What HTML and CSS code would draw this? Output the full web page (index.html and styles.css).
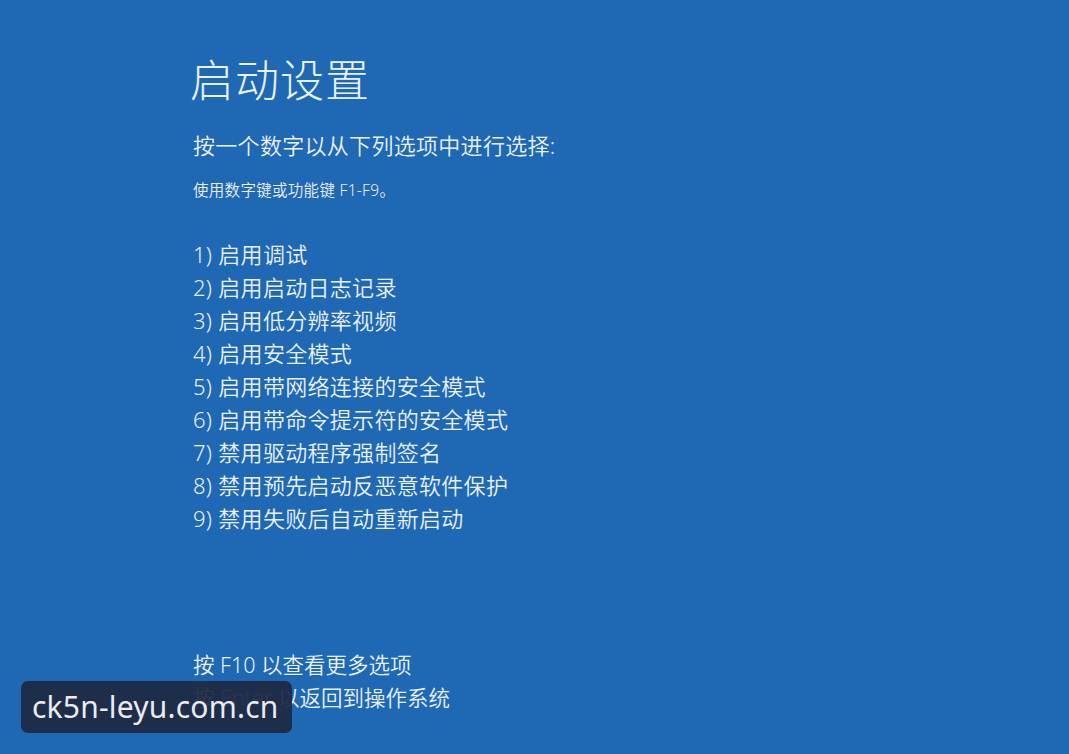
FILE: index.html
```html
<!DOCTYPE html>
<html lang="zh-CN">
<head>
<meta charset="utf-8">
<title>启动设置</title>
<link rel="stylesheet" href="styles.css">
</head>
<body>
<main class="screen">
  <h1 class="title">启动设置</h1>
  <p class="prompt">按一个数字以从下列选项中进行选择:</p>
  <p class="hint">使用数字键或功能键 F1-F9。</p>
  <ol class="options">
    <li>1) 启用调试</li>
    <li>2) 启用启动日志记录</li>
    <li>3) 启用低分辨率视频</li>
    <li>4) 启用安全模式</li>
    <li>5) 启用带网络连接的安全模式</li>
    <li>6) 启用带命令提示符的安全模式</li>
    <li>7) 禁用驱动程序强制签名</li>
    <li>8) 禁用预先启动反恶意软件保护</li>
    <li>9) 禁用失败后自动重新启动</li>
  </ol>
  <div class="footer">
    <p>按 F10 以查看更多选项</p>
    <p>按 Enter 以返回到操作系统</p>
  </div>
</main>
<div class="watermark">ck5n-leyu.com.cn</div>
</body>
</html>
```
FILE: styles.css
```css
html, body {
  margin: 0;
  padding: 0;
}
body {
  width: 1069px;
  height: 754px;
  overflow: hidden;
  background: #1e68b4;
  color: #eaf1fa;
  font-family: "Noto Sans", "Noto Sans CJK SC", sans-serif;
  position: relative;
}
.screen {
  display: flex;
  flex-direction: column;
  padding: 52px 0 0 190px;
}
.title {
  margin: 0;
  font-size: 44px;
  line-height: 56px;
  font-weight: 300;
  letter-spacing: 1px;
}
.prompt {
  margin: 22px 0 0 3px;
  font-size: 22px;
  line-height: 30px;
  font-weight: 350;
  letter-spacing: 0.3px;
}
.hint {
  margin: 20px 0 0 3px;
  font-size: 15.5px;
  line-height: 20px;
  font-weight: 350;
  letter-spacing: 0.3px;
}
.options {
  list-style: none;
  margin: 38px 0 0 3px;
  padding: 0;
  display: flex;
  flex-direction: column;
}
.options li {
  font-size: 22px;
  line-height: 33px;
  font-weight: 350;
  letter-spacing: 0.3px;
}
.footer {
  margin: 113px 0 0 3px;
  display: flex;
  flex-direction: column;
}
.footer p {
  margin: 0;
  font-size: 21.5px;
  line-height: 33px;
  font-weight: 350;
}
.watermark {
  position: absolute;
  left: 21px;
  top: 681px;
  width: 271px;
  height: 52px;
  box-sizing: border-box;
  padding-left: 11px;
  border-radius: 7px;
  background: rgba(29, 41, 66, 0.93);
  color: #ebebf0;
  font-family: "Noto Sans", sans-serif;
  font-size: 30px;
  line-height: 52px;
  letter-spacing: 0.2px;
  white-space: nowrap;
}
```
